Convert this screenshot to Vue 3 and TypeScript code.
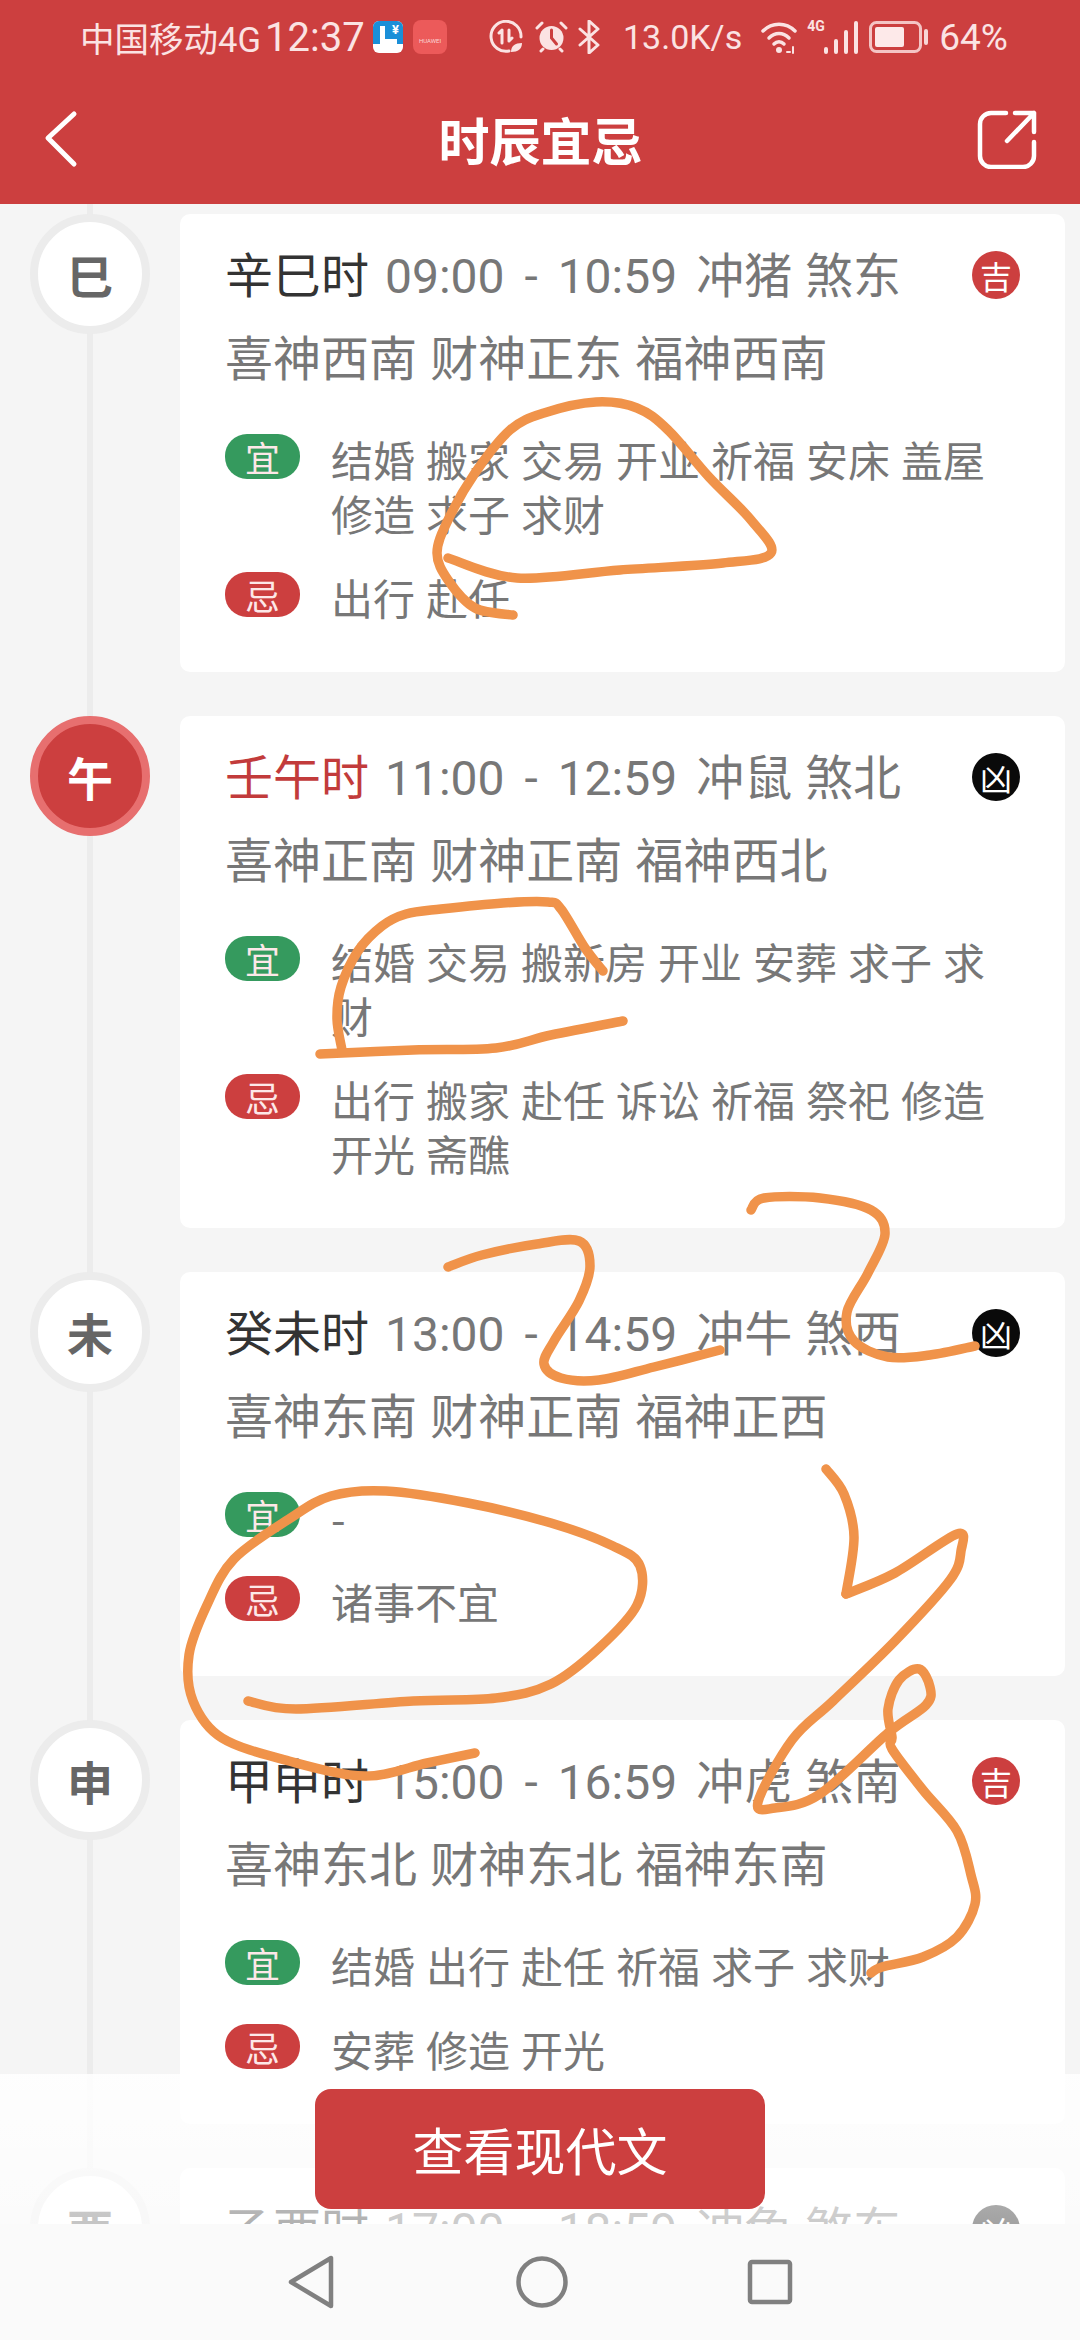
<template>
  <div class="page">
    <header class="topbar">
      <div class="status">
        <span class="carrier">中国移动4G</span>
        <span class="clock">12:37</span>
        <svg class="app-icon" width="30" height="32" viewBox="0 0 30 32">
          <rect width="30" height="32" rx="6" fill="#fff" />
          <path d="M0 6a6 6 0 0 1 6-6h18a6 6 0 0 1 6 6v17H0z" fill="#1a8fd8" />
          <path d="M7 5h5v13h12v5H7z" fill="#fff" />
          <text x="19" y="13" class="yen">¥</text>
        </svg>
        <span class="hw-icon"><span class="hw-label">HUAWEI</span></span>
        <svg class="st-i" style="margin-left: 42px" width="35" height="34" viewBox="0 0 35 34" fill="none" stroke="#fbe3e3" stroke-width="3" stroke-linecap="round">
          <path d="M20 31A15 15 0 1 1 32 17" />
          <path d="M13 10v13M13 10l-3 3M20 10v11M20 21l3-3" />
          <path d="M22 32c0-6 4-9 11-9 0 6-4 9-11 9z" fill="#fbe3e3" stroke="none" />
        </svg>
        <svg class="st-i" style="margin-left: 11px" width="33" height="34" viewBox="0 0 33 34" fill="none" stroke="#fbe3e3" stroke-linecap="round">
          <circle cx="16.500" cy="18" r="12" fill="#fbe3e3" stroke="none" />
          <path d="M16.500 10v8l5 6" stroke="#cc3f3f" stroke-width="3" />
          <path d="M2 8l5-5M31 8l-5-5M6 31l2-2M27 31l-2-2" stroke-width="3" />
        </svg>
        <svg class="st-i" style="margin-left: 10px" width="22" height="34" viewBox="0 0 22 34" fill="none" stroke="#fbe3e3" stroke-width="3" stroke-linejoin="round" stroke-linecap="round">
          <path d="M2 9l18 16-9 8V1l9 8L2 25" />
        </svg>
        <span class="speed">13.0K/s</span>
        <svg class="st-i" style="margin-left: 19px" width="36" height="33" viewBox="0 0 36 33" fill="none" stroke="#fbe3e3" stroke-width="3.500" stroke-linecap="round">
          <path d="M2 10C11 1 25 1 34 10" />
          <path d="M8 17c6-6 14-6 20 0" />
          <path d="M13 23c3-3 7-3 10 0" />
          <circle cx="18" cy="29" r="3" fill="#fbe3e3" stroke="none" />
          <path d="M26 31h3M32 26v6" stroke-width="2" />
        </svg>
        <span class="net-wrap">
          <span class="net">4G</span>
          <svg width="34" height="33" viewBox="0 0 34 33" fill="#fbe3e3">
            <rect x="0" y="26" width="4" height="7" rx="2" />
            <rect x="10" y="18" width="4" height="15" rx="2" />
            <rect x="20" y="9" width="4" height="24" rx="2" />
            <rect x="30" y="0" width="4" height="33" rx="2" />
          </svg>
        </span>
        <svg class="st-i" style="margin-left: 11px" width="60" height="32" viewBox="0 0 60 32" fill="none">
          <rect x="1.500" y="1.500" width="50" height="29" rx="6" stroke="#f4c4c4" stroke-width="3" />
          <rect x="6" y="6" width="29" height="20" rx="2" fill="#fde9e9" />
          <rect x="55" y="8" width="4" height="16" rx="2" fill="#f8d6d6" />
        </svg>
        <span class="battery">64%</span>
      </div>

      <div class="titlebar">
        <svg width="36" height="60" viewBox="0 0 36 60" fill="none" stroke="#fff" stroke-width="5" stroke-linecap="round" stroke-linejoin="round">
          <path d="M30 5 4 29l26 26" />
        </svg>
        <h1 class="title">时辰宜忌</h1>
        <svg class="share" width="60" height="60" viewBox="0 0 60 60" fill="none" stroke="#fff" stroke-width="4.500" stroke-linecap="round" stroke-linejoin="round">
          <path d="M29 4H14A11 11 0 0 0 3 15v32a11 11 0 0 0 11 11h32a11 11 0 0 0 11-11V33" />
          <path d="M30 32 57 4M38 4h19v19" />
        </svg>
      </div>
    </header>

    <main class="timeline">
      <section v-for="hour in hours" :key="hour.branch" class="entry">
        <div class="node" :class="{ current: hour.current }">{{ hour.branch }}</div>
        <div class="card">
          <div class="head">
            <p class="head-text">
              <span class="name" :class="{ current: hour.current }">{{ hour.name }}</span>
              <span class="time">{{ hour.time }}</span>
              <span class="clash">{{ hour.clash }}</span>
            </p>
            <span class="luck" :class="hour.lucky ? 'good' : 'bad'">{{ hour.lucky ? '吉' : '凶' }}</span>
          </div>
          <template v-if="hour.gods">
            <p class="gods">{{ hour.gods }}</p>
            <div class="row first">
              <span class="tag yes">宜</span>
              <p class="items">{{ hour.yes }}</p>
            </div>
            <div class="row">
              <span class="tag no">忌</span>
              <p class="items">{{ hour.no }}</p>
            </div>
          </template>
        </div>
      </section>
    </main>

    <footer class="bottom">
      <div class="action">
        <button class="modern">查看现代文</button>
      </div>
      <nav class="softkeys">
        <svg width="46" height="54" viewBox="0 0 46 54" fill="none" stroke="#808080" stroke-width="4.500" stroke-linejoin="round">
          <path d="M43 3v48L3 27z" />
        </svg>
        <svg width="52" height="54" viewBox="0 0 52 54" fill="none" stroke="#808080" stroke-width="4.500">
          <circle cx="26" cy="27" r="23.500" />
        </svg>
        <svg class="recents" width="46" height="46" viewBox="0 0 46 46" fill="none" stroke="#808080" stroke-width="4.500" stroke-linejoin="round">
          <rect x="3" y="3" width="40" height="40" rx="2" />
        </svg>
      </nav>
    </footer>

    <!-- hand drawn marks on top of the screenshot -->
    <svg class="scribble" width="1080" height="2340" viewBox="0 0 1080 2340" fill="none">
      <path v-for="(d, i) in scribblePaths" :key="i" :d="d" />
    </svg>
  </div>
</template>

<script setup lang="ts">
interface Hour {
  branch: string;
  name: string;
  time: string;
  clash: string;
  gods?: string;
  yes?: string;
  no?: string;
  lucky: boolean;
  current?: boolean;
}

type Pt = [number, number];

const hours: Hour[] = [
  {
    branch: '巳',
    name: '辛巳时',
    time: '09:00 - 10:59',
    clash: '冲猪 煞东',
    gods: '喜神西南 财神正东 福神西南',
    yes: '结婚 搬家 交易 开业 祈福 安床 盖屋 修造 求子 求财',
    no: '出行 赴任',
    lucky: true,
  },
  {
    branch: '午',
    name: '壬午时',
    time: '11:00 - 12:59',
    clash: '冲鼠 煞北',
    gods: '喜神正南 财神正南 福神西北',
    yes: '结婚 交易 搬新房 开业 安葬 求子 求财',
    no: '出行 搬家 赴任 诉讼 祈福 祭祀 修造 开光 斋醮',
    lucky: false,
    current: true,
  },
  {
    branch: '未',
    name: '癸未时',
    time: '13:00 - 14:59',
    clash: '冲牛 煞西',
    gods: '喜神东南 财神正南 福神正西',
    yes: '-',
    no: '诸事不宜',
    lucky: false,
  },
  {
    branch: '申',
    name: '甲申时',
    time: '15:00 - 16:59',
    clash: '冲虎 煞南',
    gods: '喜神东北 财神东北 福神东南',
    yes: '结婚 出行 赴任 祈福 求子 求财',
    no: '安葬 修造 开光',
    lucky: true,
  },
  // only the top of this one shows above the nav bar
  {
    branch: '酉',
    name: '乙酉时',
    time: '17:00 - 18:59',
    clash: '冲兔 煞东',
    lucky: false,
  },
];

const scribbles: Pt[][] = [
  [[513, 615], [475, 608], [448, 580], [437, 553], [448, 520], [475, 473], [510, 430], [544, 413], [596, 402], [637, 408], [668, 430], [709, 477], [751, 520], [771, 553], [723, 563], [620, 570], [517, 578], [448, 558]],
  [[603, 971], [585, 948], [561, 909], [548, 902], [503, 903], [441, 909], [406, 914], [382, 926], [358, 951], [341, 987], [337, 1019], [342, 1050]],
  [[320, 1054], [413, 1050], [496, 1048], [551, 1035], [623, 1021]],
  [[448, 1267], [482, 1255], [537, 1244], [579, 1241], [590, 1266], [579, 1301], [554, 1341], [544, 1364], [561, 1378], [599, 1380], [654, 1367], [720, 1350]],
  [[751, 1210], [764, 1198], [820, 1198], [871, 1210], [885, 1234], [868, 1273], [847, 1312], [854, 1341], [888, 1357], [930, 1355], [975, 1346]],
  [[248, 1701], [296, 1709], [413, 1701], [496, 1698], [551, 1684], [599, 1648], [637, 1605], [640, 1566], [613, 1546], [551, 1523], [468, 1503], [386, 1491], [331, 1496], [289, 1519], [234, 1559], [207, 1605], [189, 1655], [193, 1701], [222, 1738], [289, 1761], [365, 1776], [427, 1763], [475, 1753]],
  [[826, 1469], [844, 1494], [854, 1537], [846, 1594]],
  [[846, 1594], [895, 1573], [957, 1534], [961, 1551], [950, 1580], [895, 1641], [833, 1701], [792, 1740], [758, 1802], [775, 1808], [820, 1794], [888, 1733], [926, 1705], [930, 1687], [919, 1669], [899, 1680], [888, 1709], [892, 1737], [892, 1749], [923, 1790], [957, 1831], [971, 1875], [975, 1904], [957, 1937], [923, 1957], [882, 1967], [871, 1973]],
];

// Catmull-Rom through the points so the pen strokes stay round
function smooth(pts: Pt[]): string {
  let d = `M${pts[0][0]} ${pts[0][1]}`;
  for (let i = 0; i < pts.length - 1; i++) {
    const p0 = pts[i - 1] || pts[i];
    const p1 = pts[i];
    const p2 = pts[i + 1];
    const p3 = pts[i + 2] || p2;
    const c1x = p1[0] + (p2[0] - p0[0]) / 6;
    const c1y = p1[1] + (p2[1] - p0[1]) / 6;
    const c2x = p2[0] - (p3[0] - p1[0]) / 6;
    const c2y = p2[1] - (p3[1] - p1[1]) / 6;
    d += `C${c1x.toFixed(1)} ${c1y.toFixed(1)} ${c2x.toFixed(1)} ${c2y.toFixed(1)} ${p2[0]} ${p2[1]}`;
  }
  return d;
}

const scribblePaths = scribbles.map(smooth);
</script>

<style scoped>
.page {
  position: relative;
  width: 1080px;
  height: 2340px;
  overflow: hidden;
  background: #f5f5f5;
  font-family: "Noto Sans CJK SC", "Noto Sans", sans-serif;
  color: #777;
}

p,
h1 {
  margin: 0;
  font-weight: 400;
}

.topbar {
  height: 204px;
  background: #cc3f3f;
}

.status {
  display: flex;
  align-items: center;
  height: 74px;
  padding-left: 80px;
  color: #fbe3e3;
  font-family: Roboto, "Noto Sans CJK SC", sans-serif;
}

.carrier {
  width: 185px;
  font-size: 34.500px;
  white-space: nowrap;
}

.clock {
  width: 108px;
  font-size: 40px;
}

.app-icon {
  flex: none;
}

.yen {
  font-size: 13px;
  font-weight: 700;
  fill: #fff;
  font-family: Roboto, sans-serif;
}

.hw-icon {
  display: flex;
  align-items: flex-end;
  justify-content: center;
  flex: none;
  width: 34px;
  height: 34px;
  margin-left: 10px;
  padding-bottom: 9px;
  box-sizing: border-box;
  border-radius: 8px;
  background: #ec5a5a;
}

.hw-label {
  font-size: 6px;
  line-height: 8px;
  color: #fbd5d5;
}

.st-i {
  flex: none;
}

.speed {
  margin-left: 23px;
  font-size: 34px;
}

.net-wrap {
  position: relative;
  display: flex;
  margin-left: 27px;
}

.net {
  position: absolute;
  left: -17px;
  top: -3px;
  font-size: 14px;
  font-weight: 700;
  line-height: 16px;
}

.battery {
  margin-left: 10px;
  font-size: 37px;
}

.titlebar {
  display: grid;
  grid-template-columns: 1fr auto 1fr;
  align-items: center;
  height: 130px;
  padding: 0 43px 4px 44px;
}

.title {
  font-size: 51px;
  font-weight: 700;
  line-height: 60px;
  color: #fff;
}

.share {
  justify-self: end;
}

.timeline {
  position: relative;
  display: flex;
  flex-direction: column;
  gap: 44px;
  padding: 10px 15px 0 30px;
}

.timeline::before {
  content: "";
  position: absolute;
  left: 87px;
  top: 0;
  bottom: 0;
  width: 6px;
  background: #ececec;
}

.entry {
  position: relative;
  display: flex;
  align-items: flex-start;
  gap: 30px;
}

.node {
  display: flex;
  align-items: center;
  justify-content: center;
  flex: none;
  width: 120px;
  height: 120px;
  box-sizing: border-box;
  border: 8px solid #ececec;
  border-radius: 50%;
  background: #fff;
  color: #666;
  font-size: 46px;
  font-weight: 700;
}

.node.current {
  border-color: #e76f6f;
  background: #cc3f3f;
  color: #fff;
}

.card {
  flex: 1;
  padding: 32px 45px 48px 45px;
  border-radius: 10px;
  background: #fff;
}

.head {
  display: flex;
  align-items: center;
  justify-content: space-between;
  height: 56px;
}

.head-text {
  display: flex;
  align-items: baseline;
  font-size: 48px;
  line-height: 56px;
  white-space: nowrap;
}

.name {
  color: #333;
}

.name.current {
  color: #c23b3b;
}

.time {
  margin-left: 16px;
  font-family: Roboto, "Noto Sans", sans-serif;
  word-spacing: 8px;
}

.clash {
  margin-left: 19px;
  word-spacing: 2px;
}

.luck {
  display: flex;
  align-items: center;
  justify-content: center;
  width: 48px;
  height: 48px;
  margin-top: 2px;
  border-radius: 50%;
  color: #fff;
  font-size: 32px;
  line-height: 1;
}

.luck.good {
  background: #cc3f3f;
}

.luck.bad {
  background: #0a0a0a;
}

.gods {
  margin-top: 25px;
  font-size: 48px;
  line-height: 56px;
  word-spacing: 2.500px;
}

.row {
  display: flex;
  align-items: flex-start;
  margin-top: 30px;
}

.row.first {
  margin-top: 49px;
}

.tag {
  display: flex;
  align-items: center;
  justify-content: center;
  flex: none;
  width: 75px;
  height: 45px;
  margin-top: 2px;
  border-radius: 22px;
  color: #fde8e8;
  font-size: 35px;
  line-height: 1;
}

.tag.yes {
  background: #359a5e;
}

.tag.no {
  background: #cc3f3f;
}

.items {
  width: 670px;
  margin-left: 31px;
  font-size: 42px;
  line-height: 54px;
  word-spacing: 1.600px;
}

.bottom {
  position: absolute;
  left: 0;
  right: 0;
  bottom: 0;
}

.action {
  display: flex;
  justify-content: center;
  height: 150px;
  padding-top: 15px;
  box-sizing: border-box;
  background: linear-gradient(rgba(255, 255, 255, 0.88), rgba(255, 255, 255, 0.62));
}

.modern {
  width: 450px;
  height: 120px;
  border: none;
  border-radius: 16px;
  background: #cc3f3f;
  color: #fff;
  font-family: inherit;
  font-size: 51px;
}

.softkeys {
  position: relative;
  display: flex;
  align-items: center;
  justify-content: center;
  gap: 182px;
  height: 116px;
  box-sizing: border-box;
  background: #fafafa;
}

.recents {
  margin-left: -3px;
}

.scribble {
  position: absolute;
  left: 0;
  top: 0;
  pointer-events: none;
}

.scribble path {
  stroke: #f0934a;
  stroke-width: 9.500;
  stroke-linecap: round;
  stroke-linejoin: round;
}
</style>
